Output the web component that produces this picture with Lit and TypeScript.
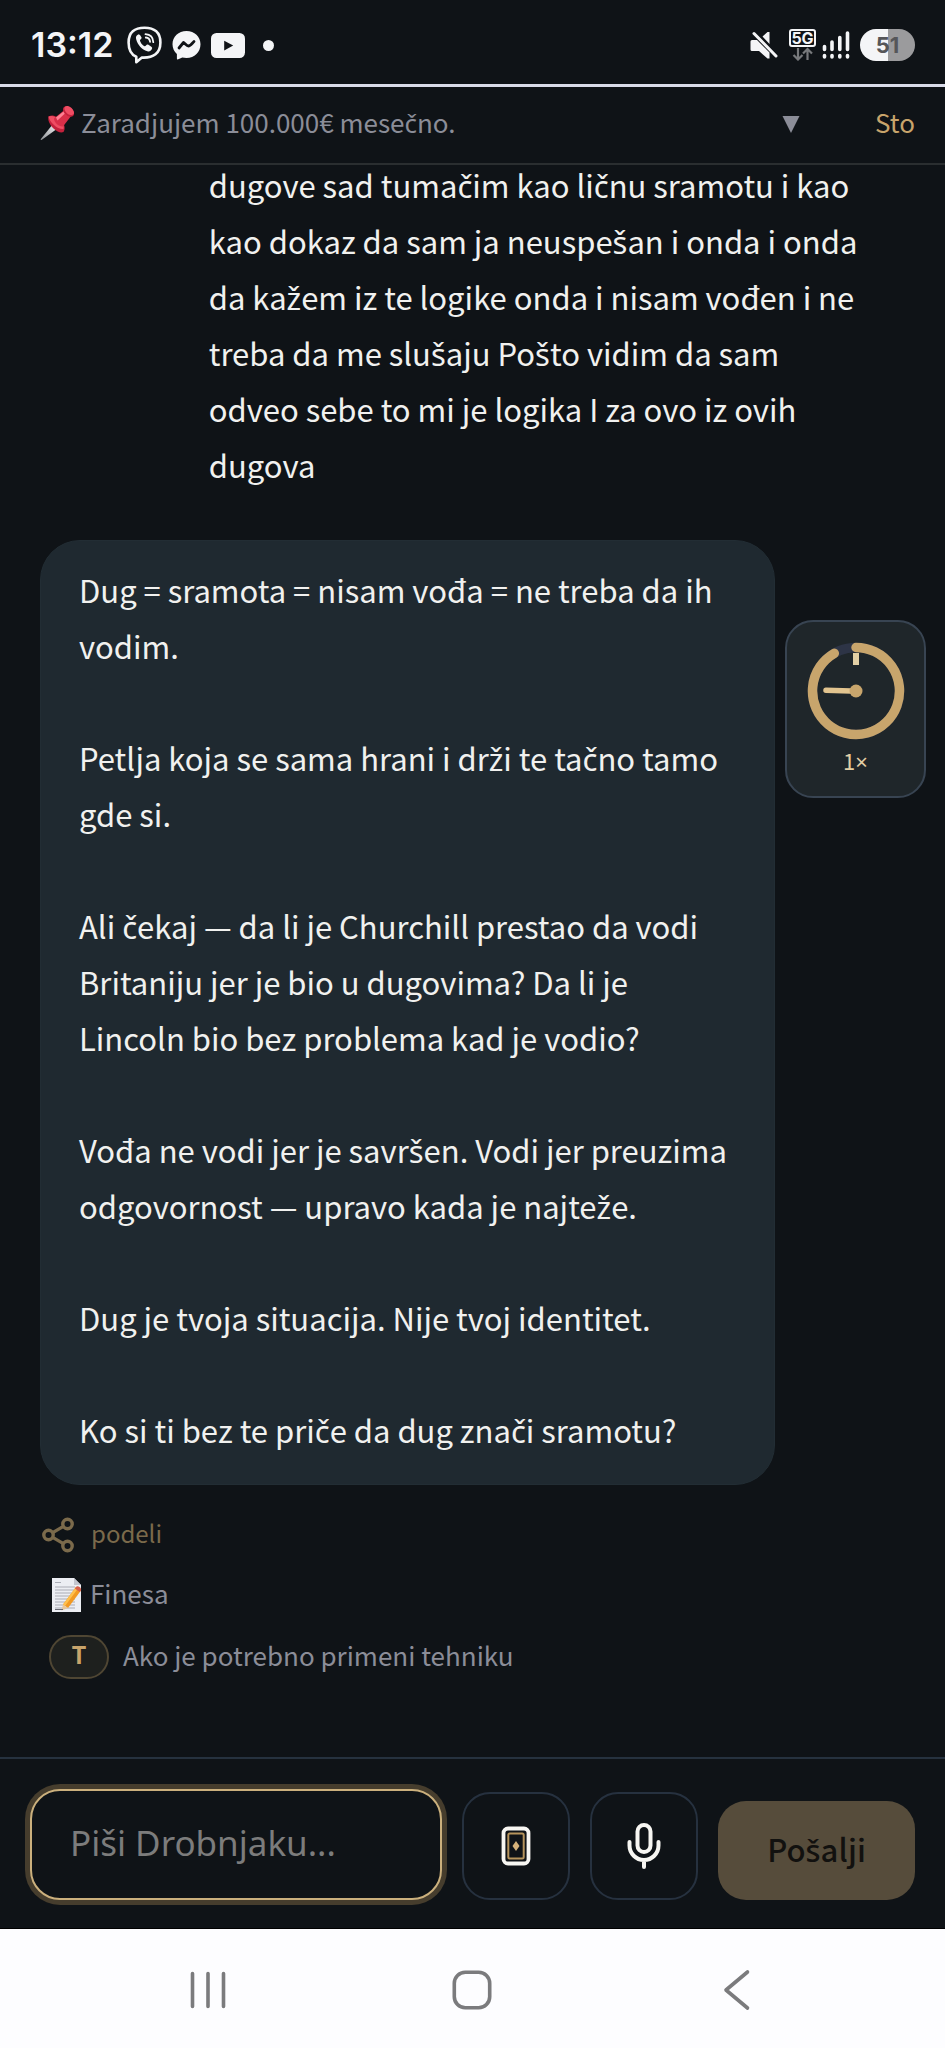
import { LitElement, html, css, svg } from "lit";
import { customElement, state } from "lit/decorators.js";

const USER_TEXT =
  "dugove sad tumačim kao ličnu sramotu i kao kao dokaz da sam ja neuspešan i onda i onda da kažem iz te logike onda i nisam vođen i ne treba da me slušaju Pošto vidim da sam odveo sebe to mi je logika I za ovo iz ovih dugova";

const REPLY = [
  "Dug = sramota = nisam vođa = ne treba da ih vodim.",
  "Petlja koja se sama hrani i drži te tačno tamo gde si.",
  "Ali čekaj — da li je Churchill prestao da vodi Britaniju jer je bio u dugovima? Da li je Lincoln bio bez problema kad je vodio?",
  "Vođa ne vodi jer je savršen. Vodi jer preuzima odgovornost — upravo kada je najteže.",
  "Dug je tvoja situacija. Nije tvoj identitet.",
  "Ko si ti bez te priče da dug znači sramotu?",
];

const latin = css`
  .caron {
    font-family: "Noto Sans", sans-serif;
    line-height: 1;
  }
`;

function sr(text: string) {
  return text
    .split(/([čšžČŠŽ×])/)
    .map((part, i) => (i % 2 ? html`<span class="caron">${part}</span>` : part));
}

@customElement("status-bar")
class StatusBar extends LitElement {
  static styles = css`
    :host {
      display: flex;
      align-items: center;
      justify-content: space-between;
      height: 87px;
      padding: 6px 30px 0 31px;
      box-sizing: border-box;
      border-bottom: 3px solid #d9dbe8;
      color: #f4f5f7;
      font-family: Inter, "Liberation Sans", sans-serif;
    }
    .side {
      display: flex;
      align-items: center;
    }
    .left {
      gap: 10px;
    }
    .time {
      font-size: 34px;
      font-weight: 600;
      line-height: 40px;
      margin-right: 4px;
    }
    .dot {
      width: 11px;
      height: 11px;
      border-radius: 50%;
      background: #f4f5f7;
      margin-left: 8px;
    }
    .right {
      gap: 6px;
    }
    .net {
      display: flex;
      flex-direction: column;
      align-items: center;
      margin-left: 5px;
    }
    .gen {
      box-sizing: border-box;
      width: 27px;
      height: 18px;
      border: 2px solid #f4f5f7;
      border-radius: 3px;
      font-size: 16px;
      font-weight: 700;
      line-height: 14px;
      text-align: center;
    }
    .battery {
      width: 55px;
      height: 32px;
      border-radius: 16px;
      background: linear-gradient(to right, #f4f5f7 51%, #9b9b9d 51%);
      color: #555659;
      font-size: 22px;
      font-weight: 700;
      line-height: 32px;
      text-align: center;
      margin-left: 4px;
    }
    svg {
      display: block;
    }
  `;

  render() {
    return html`
      <div class="side left">
        <span class="time">13:12</span>
        <svg width="35" height="38" viewBox="0 0 35 38" fill="none" stroke="#f4f5f7" stroke-width="2.6" stroke-linecap="round" stroke-linejoin="round">
          <path d="M17.5 1.8C7.5 1.8 1.6 6.200 1.600 16.500c0 7.500 2.700 12.200 7.700 14.200v5.600l5.600-4.700c11.600.6 18.500-4.300 18.500-15.100C33.400 6.200 27.500 1.800 17.500 1.800z" />
          <path fill="#f4f5f7" stroke="none" d="M11.800 8.200c-2.200 1-3.300 2.300-2.700 4.700 1.600 6 5.600 10.300 11.300 12.400 2 .7 3.500-.3 4.600-2.500.5-1-.1-1.700-1-2.300l-2.600-1.700c-1-.6-1.700-.2-2.400.7-.8 1-1.700.8-3-.3-1.500-1.300-2.500-2.700-2.900-4.200-.3-1 .2-1.400.9-2 .7-.5.700-1.200.3-2-.7-1.200-1.400-2.400-2.500-2.800z" />
          <path stroke-width="1.800" d="M18.500 8.200c4.800.4 7.600 3.300 7.800 8M18.800 11.500c2.500.3 4.100 1.800 4.300 4.400" />
        </svg>
        <svg width="29" height="30" viewBox="0 0 29 30">
          <path fill="#f4f5f7" d="M14.500 1C6.500 1 .5 6.700.5 14.300c0 4 1.700 7.300 4.400 9.600v4.500c0 .8.7 1.200 1.400.9l4-1.800c1.300.3 2.700.5 4.200.5 8 0 14-5.900 14-13.700S22.500 1 14.500 1z" />
          <path fill="none" stroke="#101317" stroke-width="2.800" stroke-linecap="round" stroke-linejoin="round" d="M7 18l4.500-5.500c1.700 1 3 3.500 5 3.500 1.800 0 3.500-2.500 5.500-4.500" />
        </svg>
        <svg width="34" height="25" viewBox="0 0 34 25">
          <rect width="34" height="25" rx="5.500" fill="#f4f5f7" />
          <path fill="#101317" d="M13.200 7.800v9.600l9-4.800z" />
        </svg>
        <span class="dot"></span>
      </div>
      <div class="side right">
        <svg width="28" height="28" viewBox="0 0 28 28">
          <path fill="#f4f5f7" d="M2 9h5l8 8 4.500 4.500V27.500h-2L9 20H2a1.500 1.500 0 0 1-1.500-1.500v-8A1.500 1.500 0 0 1 2 9zM12.500 5.500l5-4.500h2v12z" />
          <path stroke="#f4f5f7" stroke-width="3" stroke-linecap="round" d="M4 2.500l22 22.500" />
        </svg>
        <div class="net">
          <span class="gen">5G</span>
          <svg width="22" height="14" viewBox="0 0 22 14" fill="none" stroke="#77797c" stroke-width="2.200">
            <path d="M6 1v11M1.500 8L6 12.500 10.500 8M15.500 13V2M11 6.500L15.500 2 20 6.500" />
          </svg>
        </div>
        <svg width="28" height="30" viewBox="0 0 28 30" stroke="#f4f5f7" stroke-width="3.600" stroke-linecap="round">
          <path d="M2.500 16.500v3M10 12v7.500M17.800 7.500v12M25.500 3v16.500M2.500 25.500v1.500M10 25.500v1.500M17.800 25.500v1.500M25.500 25.500v1.500" />
        </svg>
        <span class="battery">51</span>
      </div>
    `;
  }
}

@customElement("topic-bar")
class TopicBar extends LitElement {
  static styles = [
    latin,
    css`
      :host {
        display: flex;
        align-items: center;
        height: 78px;
        padding: 0 30px 6px 40px;
        box-sizing: border-box;
        border-bottom: 2px solid #2a2e30;
        color: #8b8d98;
        font-size: 26px;
        line-height: 40px;
      }
      .topic {
        flex: 1;
        margin-left: 7px;
      }
      button {
        font: inherit;
        border: 0;
        background: none;
        padding: 0;
        color: inherit;
      }
      .stop {
        color: #c8a46b;
        margin-left: 75px;
      }
      svg {
        display: block;
      }
    `,
  ];

  render() {
    return html`
      <svg width="34" height="38" viewBox="0 -2 34 38">
        <defs>
          <linearGradient id="needle" x1="0" y1="1" x2="1" y2="0">
            <stop offset="0" stop-color="#8e9296" />
            <stop offset="1" stop-color="#f2f3f5" />
          </linearGradient>
        </defs>
        <path fill="url(#needle)" d="M.5 34.500L13 19l4.500 4.500L1.500 35z" />
        <path fill="#c4213c" d="M8.500 11.500c3.500-2 7-1.200 11 2.500 5 4.500 6.500 9 4 13-2 1-6 .5-10-3.500S7.500 15 8.500 11.500z" />
        <path fill="#ef4d63" d="M8.500 11.500c3-1.500 7-.2 10.500 3s5.500 6.500 4.500 9.500c-3 .3-6.500-1-9.800-4.300S8.800 14 8.500 11.500z" />
        <path fill="#d92f49" d="M14 13.500L25 4.500l6.500 6L23 21.500c-4 .5-9-4-9-8z" />
        <path fill="#ff8093" d="M16 12.500L25.500 5l1.500 1.500-9.500 9z" />
        <ellipse cx="28.500" cy="6.500" rx="6.400" ry="4.200" transform="rotate(42 28.500 6.500)" fill="#c4213c" />
        <ellipse cx="29.200" cy="5.600" rx="5.600" ry="3.500" transform="rotate(42 29.200 5.600)" fill="#ef4d63" />
      </svg>
      <span class="topic">${sr("Zaradjujem 100.000€ mesečno.")}</span>
      <button aria-label="Prikaži više">
        <svg width="18" height="22" viewBox="0 -4 18 22"><path fill="#8b8d98" d="M.5 1h17L9 18z" /></svg>
      </button>
      <button class="stop">Sto</button>
    `;
  }
}

@customElement("speed-dial")
class SpeedDial extends LitElement {
  static styles = [
    latin,
    css`
      :host {
        display: block;
      }
      .dial {
        display: flex;
        flex-direction: column;
        align-items: center;
        gap: 5px;
        width: 141px;
        height: 178px;
        box-sizing: border-box;
        padding: 20px 0 0;
        border: 2px solid #384452;
        border-radius: 28px;
        background: #1f262a;
        color: #e2cfa5;
        font: inherit;
        font-size: 22px;
        line-height: 30px;
      }
      svg {
        display: block;
      }
    `,
  ];

  render() {
    return html`
      <button class="dial" aria-label="Brzina 1×">
        <svg width="98" height="98" viewBox="0 0 98 98" fill="none">
          <circle cx="49" cy="49" r="43.500" stroke="#2d3446" stroke-width="9.500" />
          <path stroke="#c8a56c" stroke-width="9.500" stroke-linecap="round" d="M49 5.500A43.500 43.500 0 1 1 27.300 11.300" />
          <path stroke="#e2cfa5" stroke-width="6" d="M49 11v12" />
          <path stroke="#e2c48f" stroke-width="5.500" stroke-linecap="round" d="M19 48.300L44 49" />
          <circle cx="49" cy="49" r="6.500" fill="#c8a56c" />
        </svg>
        <span>${sr("1×")}</span>
      </button>
    `;
  }
}

@customElement("chat-log")
class ChatLog extends LitElement {
  static styles = [
    latin,
    css`
      :host {
        display: flex;
        flex-direction: column;
        justify-content: flex-end;
        flex: 1;
        min-height: 0;
        overflow: hidden;
        position: relative;
        padding: 0 40px 78px;
        box-sizing: border-box;
        color: #f1f1ef;
        font-size: 31px;
        line-height: 56px;
      }
      .mine,
      .reply {
        flex-shrink: 0;
        width: 85%;
        box-sizing: border-box;
        padding: 21px 38px 26px;
        border: 1px solid transparent;
        border-radius: 40px;
      }
      .mine {
        align-self: flex-end;
        margin-bottom: 20px;
      }
      .reply {
        border-color: #222d34;
        background: #1f2930;
      }
      p {
        margin: 0;
      }
      p + p {
        margin-top: 56px;
      }
      .meta {
        display: flex;
        flex-direction: column;
        align-items: flex-start;
        gap: 20px;
        flex-shrink: 0;
        font-size: 26px;
        line-height: 36px;
        color: #8b8d98;
        padding-top: 30px;
      }
      .label {
        padding-bottom: 4px;
      }
      button {
        display: flex;
        align-items: center;
        border: 0;
        background: none;
        padding: 0;
        font: inherit;
        color: inherit;
      }
      .share {
        gap: 15px;
        color: #7b6a4b;
        font-size: 24px;
      }
      .note {
        gap: 7px;
        margin-left: 11px;
      }
      .hint {
        display: flex;
        align-items: center;
        gap: 14px;
        margin-left: 9px;
      }
      .tag {
        box-sizing: border-box;
        width: 60px;
        height: 44px;
        border: 2px solid #4f4633;
        border-radius: 22px;
        background: #1e201e;
        color: #c8a46b;
        font-size: 24px;
        font-weight: 700;
        line-height: 34px;
        text-align: center;
      }
      .float {
        position: absolute;
        top: 455px;
        right: 19px;
      }
      svg {
        display: block;
      }
    `,
  ];

  render() {
    return html`
      <div class="mine"><p>${sr(USER_TEXT)}</p></div>
      <div class="reply">${REPLY.map((t) => html`<p>${sr(t)}</p>`)}</div>
      <div class="meta">
        <button class="share">
          <svg width="36" height="36" viewBox="0 0 36 36" fill="none" stroke="#7b6a4b" stroke-width="3.400">
            <circle cx="8.500" cy="18" r="4.700" />
            <circle cx="27.500" cy="7" r="4.700" />
            <circle cx="27.500" cy="29" r="4.700" />
            <path d="M12.700 15.600L23.400 9.400M12.700 20.400l10.700 6.200" />
          </svg>
          <span class="label">podeli</span>
        </button>
        <button class="note">
          <svg width="32" height="36" viewBox="0 0 32 36">
            <path fill="#eceef3" d="M1 1h22l7 7v27H1z" />
            <path fill="#c3c6cf" d="M23 1v7h7z" />
            <path stroke="#a9acb5" stroke-width="1.200" d="M4 5.500h6M4 10h20M4 13h20M4 16h20M4 19h20M4 22h20M4 25h20M4 28h20M4 31h20" />
            <path fill="#f29a23" d="M25 10l5 3.500L17 31l-5-3.500z" />
            <path fill="#ffc04d" d="M25 10l2 1.400L14 29l-2-1.500z" />
            <path fill="#d8604c" d="M25 10c1.500-2 6 1 5 3.500l-1.200 1.600-5-3.500z" />
            <path fill="#e8c79a" d="M12 27.500l5 3.500-6.500 2.500z" />
            <path stroke="#6a6c75" stroke-width="1" d="M4 32.500h8" />
          </svg>
          <span class="label">Finesa</span>
        </button>
        <div class="hint">
          <span class="tag">T</span>
          <span class="label">Ako je potrebno primeni tehniku</span>
        </div>
      </div>
      <speed-dial class="float"></speed-dial>
    `;
  }
}

@customElement("message-composer")
class MessageComposer extends LitElement {
  static styles = [
    latin,
    css`
      :host {
        display: flex;
        align-items: flex-end;
        gap: 20px;
        padding: 30px 30px 28px;
        border-top: 2px solid #26323f;
        border-bottom: 1px solid #000;
      }
      input {
        flex: 1;
        min-width: 0;
        height: 111px;
        box-sizing: border-box;
        padding: 0 38px 4px;
        border: 2px solid #cbb07d;
        border-radius: 30px;
        box-shadow: 0 0 0 5px #463d2d;
        outline: none;
        background: #0f1317;
        color: #f1f1ef;
        font: inherit;
        font-family: "Noto Sans", sans-serif;
        font-size: 35px;
      }
      input::placeholder {
        color: #7c7c7c;
        opacity: 1;
      }
      button {
        display: flex;
        align-items: center;
        justify-content: center;
        box-sizing: border-box;
        border-radius: 28px;
        padding: 0;
        font: inherit;
      }
      .tool {
        width: 108px;
        height: 108px;
        border: 2px solid #26313f;
        background: #0f1317;
      }
      .send {
        width: 197px;
        height: 99px;
        border: 0;
        padding-bottom: 4px;
        background: #564c3b;
        color: #12110f;
        font-size: 31px;
        font-weight: 500;
      }
      svg {
        display: block;
      }
    `,
  ];

  @state() private draft = "";

  render() {
    return html`
      <input
        type="text"
        aria-label="Poruka"
        placeholder="Piši Drobnjaku..."
        .value=${this.draft}
        @input=${(e: Event) => (this.draft = (e.target as HTMLInputElement).value)}
      />
      <button class="tool" aria-label="Karte">
        <svg width="30" height="40" viewBox="0 0 30 40" fill="none">
          <rect x="2.500" y="2.500" width="25" height="35" rx="4.500" stroke="#f7f6f2" stroke-width="3.800" />
          <rect x="7.300" y="7.500" width="15.400" height="25" rx="1.500" stroke="#b5935c" stroke-width="2" />
          <path fill="#d6b27a" d="M15 15l3.500 5-3.500 5-3.500-5z" />
        </svg>
      </button>
      <button class="tool" aria-label="Mikrofon">
        <svg width="36" height="48" viewBox="0 0 36 48" fill="none" stroke="#f7f6f2" stroke-width="4" stroke-linecap="round">
          <rect x="11.500" y="3" width="13" height="27" rx="6.500" />
          <path d="M3.500 20v3.500a14.500 14.500 0 0 0 29 0V20M18 38.500V45" />
        </svg>
      </button>
      <button class="send"><span>${sr("Pošalji")}</span></button>
    `;
  }
}

@customElement("system-nav")
class SystemNav extends LitElement {
  static styles = css`
    :host {
      display: grid;
      grid-template-columns: repeat(3, 1fr);
      padding: 0 8%;
      height: 119px;
      box-sizing: border-box;
      background: #fdfdff;
    }
    button {
      display: flex;
      align-items: center;
      justify-content: center;
      border: 0;
      background: none;
      padding: 2px 0 0;
    }
  `;

  private icon(shape: unknown) {
    return html`<svg width="42" height="42" viewBox="0 0 42 42" fill="none" stroke="#7b7b7d" stroke-width="3.600" stroke-linecap="round">${shape}</svg>`;
  }

  render() {
    return html`
      <button aria-label="Nedavno">${this.icon(svg`<path d="M5.500 4.500v33M21 4.500v33M36.500 4.500v33" />`)}</button>
      <button aria-label="Početna">${this.icon(svg`<rect x="3.300" y="3.300" width="35.400" height="35.400" rx="11" />`)}</button>
      <button aria-label="Nazad">${this.icon(svg`<path d="M31.500 3L10 21l21.500 18" stroke-linejoin="round" />`)}</button>
    `;
  }
}

@customElement("app-root")
class AppRoot extends LitElement {
  static styles = css`
    :host {
      display: flex;
      flex-direction: column;
      height: 100vh;
      background: #0f1317;
      font-family: "Noto Sans CJK SC", "Noto Sans", sans-serif;
    }
  `;

  render() {
    return html`
      <status-bar></status-bar>
      <topic-bar></topic-bar>
      <chat-log></chat-log>
      <message-composer></message-composer>
      <system-nav></system-nav>
    `;
  }
}
